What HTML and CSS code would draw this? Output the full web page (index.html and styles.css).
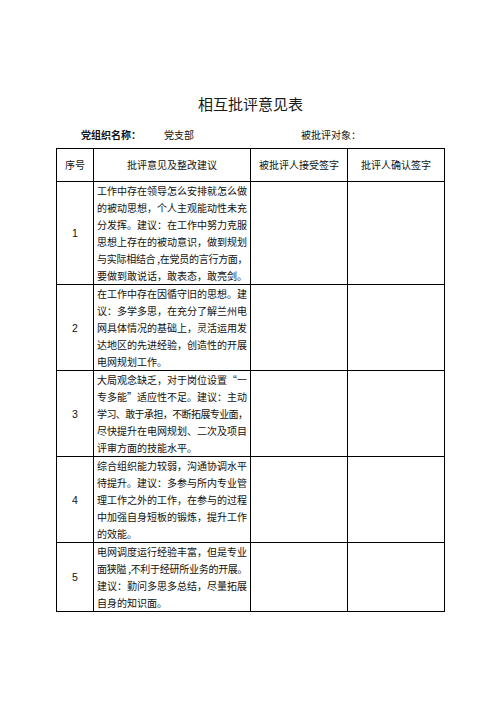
FILE: index.html
```html
<!DOCTYPE html>
<html lang="zh">
<head>
<meta charset="utf-8">
<title>相互批评意见表</title>
<link rel="stylesheet" href="styles.css">
</head>
<body>
<div class="page">
  <h1 class="title">相互批评意见表</h1>
  <div class="info">
    <span class="org-label">党组织名称：</span>
    <span class="org-name">党支部</span>
    <span class="target">被批评对象：</span>
  </div>
  <table class="sheet">
    <colgroup>
      <col class="c-no">
      <col class="c-text">
      <col class="c-sign">
      <col class="c-sign">
    </colgroup>
    <thead>
      <tr class="head">
        <th>序号</th>
        <th>批评意见及整改建议</th>
        <th>被批评人接受签字</th>
        <th>批评人确认签字</th>
      </tr>
    </thead>
    <tbody>
      <tr>
        <td class="no">1</td>
        <td class="txt">
          <span class="ln">工作中存在领导怎么安排就怎么做</span>
          <span class="ln">的被动思想，个人主观能动性未充</span>
          <span class="ln">分发挥。建议：在工作中努力克服</span>
          <span class="ln">思想上存在的被动意识，做到规划</span>
          <span class="ln tight">与实际相结合 ,在党员的言行方面，</span>
          <span class="ln">要做到敢说话，敢表态，敢亮剑。</span>
        </td>
        <td></td>
        <td></td>
      </tr>
      <tr>
        <td class="no">2</td>
        <td class="txt">
          <span class="ln">在工作中存在因循守旧的思想。建</span>
          <span class="ln">议：多学多思，在充分了解兰州电</span>
          <span class="ln">网具体情况的基础上，灵活运用发</span>
          <span class="ln">达地区的先进经验，创造性的开展</span>
          <span class="end">电网规划工作。</span>
        </td>
        <td></td>
        <td></td>
      </tr>
      <tr>
        <td class="no">3</td>
        <td class="txt">
          <span class="ln">大局观念缺乏，对于岗位设置“一</span>
          <span class="ln">专多能”适应性不足。建议：主动</span>
          <span class="ln tight">学习、敢于承担，不断拓展专业面，</span>
          <span class="ln">尽快提升在电网规划、二次及项目</span>
          <span class="end">评审方面的技能水平。</span>
        </td>
        <td></td>
        <td></td>
      </tr>
      <tr>
        <td class="no">4</td>
        <td class="txt">
          <span class="ln">综合组织能力较弱，沟通协调水平</span>
          <span class="ln">待提升。建议：多参与所内专业管</span>
          <span class="ln">理工作之外的工作，在参与的过程</span>
          <span class="ln">中加强自身短板的锻炼，提升工作</span>
          <span class="end">的效能。</span>
        </td>
        <td></td>
        <td></td>
      </tr>
      <tr>
        <td class="no">5</td>
        <td class="txt">
          <span class="ln">电网调度运行经验丰富，但是专业</span>
          <span class="ln tight">面狭隘 ,不利于经研所业务的开展。</span>
          <span class="ln">建议：勤问多思多总结，尽量拓展</span>
          <span class="end">自身的知识面。</span>
        </td>
        <td></td>
        <td></td>
      </tr>
    </tbody>
  </table>
</div>
</body>
</html>
```

FILE: styles.css
```css
html, body {
  margin: 0;
  padding: 0;
  background: #ffffff;
}

body {
  font-family: "Noto Sans CJK SC", "Noto Sans", sans-serif;
  color: #111111;
}

.page {
  width: 389px;
  margin: 0 auto 0 56px;
  padding-top: 94px;
}

.title {
  margin: 0;
  font-size: 15px;
  line-height: 20px;
  font-weight: 400;
  text-align: center;
  color: #1a1a1a;
}

.info {
  display: flex;
  align-items: center;
  margin-top: 14px;
  height: 14px;
  font-size: 10px;
  line-height: 14px;
  padding-left: 25px;
}

.org-label {
  font-weight: 700;
  width: 83px;
}

.org-name {
  width: 137px;
}

.sheet {
  margin-top: 6px;
  width: 389px;
  table-layout: fixed;
  border-collapse: collapse;
  font-size: 10px;
}

.c-no { width: 37px; }
.c-text { width: 157px; }
.c-sign { width: 97px; }

.sheet th,
.sheet td {
  border: 1px solid #000000;
  padding: 0;
  vertical-align: middle;
}

.head th {
  height: 32px;
  font-weight: 400;
  text-align: center;
  line-height: 14px;
}

.no {
  text-align: center;
  font-family: "Liberation Sans", "Noto Sans", sans-serif;
  font-size: 10.5px;
}

.txt {
  padding: 0 3px 0 3px !important;
  line-height: 17px;
}

.ln {
  display: block;
  white-space: nowrap;
  text-align: justify;
  text-align-last: justify;
}

.ln.tight {
  letter-spacing: -0.6px;
}

.end {
  display: block;
  white-space: nowrap;
  text-align: left;
}
```
